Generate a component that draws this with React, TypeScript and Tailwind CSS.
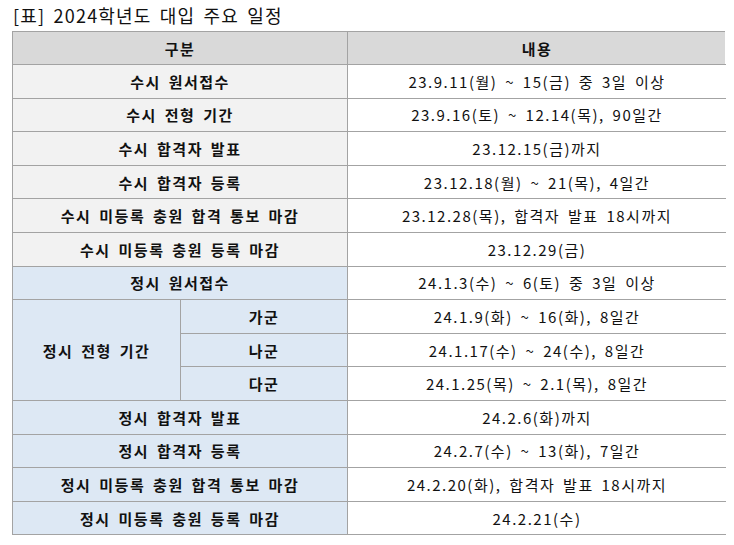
import React from 'react';

type Row = { label: string; value: string; tone: 'su' | 'jeong' };

const topRows: Row[] = [
    { label: '수시 원서접수', value: '23.9.11(월) ~ 15(금) 중 3일 이상', tone: 'su' },
    { label: '수시 전형 기간', value: '23.9.16(토) ~ 12.14(목), 90일간', tone: 'su' },
    { label: '수시 합격자 발표', value: '23.12.15(금)까지', tone: 'su' },
    { label: '수시 합격자 등록', value: '23.12.18(월) ~ 21(목), 4일간', tone: 'su' },
    { label: '수시 미등록 충원 합격 통보 마감', value: '23.12.28(목), 합격자 발표 18시까지', tone: 'su' },
    { label: '수시 미등록 충원 등록 마감', value: '23.12.29(금)', tone: 'su' },
    { label: '정시 원서접수', value: '24.1.3(수) ~ 6(토) 중 3일 이상', tone: 'jeong' },
];

const groupRows = [
    { label: '가군', value: '24.1.9(화) ~ 16(화), 8일간' },
    { label: '나군', value: '24.1.17(수) ~ 24(수), 8일간' },
    { label: '다군', value: '24.1.25(목) ~ 2.1(목), 8일간' },
];

const bottomRows: Row[] = [
    { label: '정시 합격자 발표', value: '24.2.6(화)까지', tone: 'jeong' },
    { label: '정시 합격자 등록', value: '24.2.7(수) ~ 13(화), 7일간', tone: 'jeong' },
    { label: '정시 미등록 충원 합격 통보 마감', value: '24.2.20(화), 합격자 발표 18시까지', tone: 'jeong' },
    { label: '정시 미등록 충원 등록 마감', value: '24.2.21(수)', tone: 'jeong' },
];

function ScheduleRow({ row }: { row: Row }) {
    const bg = row.tone === 'su' ? 'bg-[#f2f2f2]' : 'bg-[#dde8f4]';
    return (
        <div className="flex h-[33.6px]">
            <div className={`w-[335px] shrink-0 flex items-center justify-center border-r border-b border-[#a3a3a3] font-semibold ${bg}`}>
                {row.label}
            </div>
            <div className="w-[378px] shrink-0 flex items-center justify-center border-b border-[#a3a3a3] bg-white">
                {row.value}
            </div>
        </div>
    );
}

export default function App() {
    return (
        <div
            className="w-[734px] h-[545px] bg-white text-[#111] overflow-hidden"
            style={{ fontFamily: '"Noto Sans CJK KR", "Noto Sans", sans-serif' }}
        >
            <div className="h-[31px] pl-[13px] pt-[2px] text-[18px] leading-[26px] tracking-[1.2px] [word-spacing:3px]">
                [표] 2024학년도 대입 주요 일정
            </div>

            <div className="ml-[12px] w-[713px] border-t border-l border-[#a3a3a3] text-[15px] tracking-[1.5px] [word-spacing:3px] leading-none">
                <div className="flex h-[33px] bg-[#d9d9d9] font-semibold">
                    <div className="w-[335px] shrink-0 flex items-center justify-center border-r border-b border-[#a3a3a3]">구분</div>
                    <div className="w-[378px] shrink-0 flex items-center justify-center border-b border-[#a3a3a3]">내용</div>
                </div>

                {topRows.map((row) => (
                    <ScheduleRow key={row.label} row={row} />
                ))}

                <div className="flex">
                    <div className="w-[168px] shrink-0 flex items-center justify-center border-r border-b border-[#a3a3a3] bg-[#dde8f4] font-semibold">
                        정시 전형 기간
                    </div>
                    <div className="flex flex-col">
                        {groupRows.map((g) => (
                            <div key={g.label} className="flex h-[33.6px]">
                                <div className="w-[167px] shrink-0 flex items-center justify-center border-r border-b border-[#a3a3a3] bg-[#dde8f4] font-semibold">
                                    {g.label}
                                </div>
                                <div className="w-[378px] shrink-0 flex items-center justify-center border-b border-[#a3a3a3] bg-white">
                                    {g.value}
                                </div>
                            </div>
                        ))}
                    </div>
                </div>

                {bottomRows.map((row) => (
                    <ScheduleRow key={row.label} row={row} />
                ))}
            </div>
        </div>
    );
}
